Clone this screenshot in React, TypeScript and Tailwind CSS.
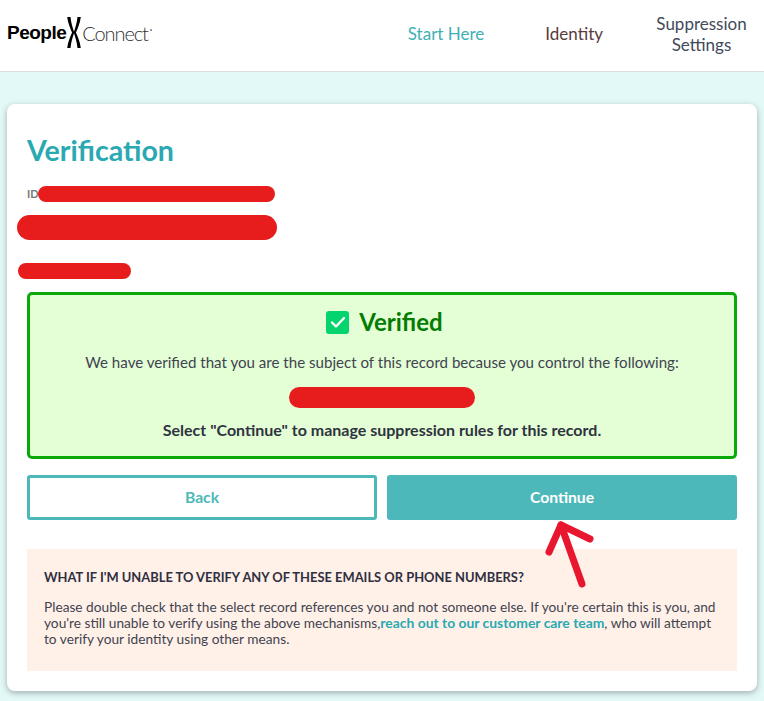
import React from 'react';

const fontStack = { fontFamily: '"Lato", "Noto Sans", sans-serif' };

const Logo = () => (
  <div className="mb-[6px] ml-[1px] flex items-center">
    <span className="font-['Liberation_Sans'] text-[19px] font-bold leading-none tracking-[-0.5px] text-black">People</span>
    <svg width="16" height="33" viewBox="0 0 16 34">
      <path d="M1 1h3.400c.6 6 2.200 11 3.600 15.200C9.400 12 11 7 11.600 1H15c-.8 7-3.400 12-5 16 1.600 4 4.200 9 5 16h-3.400C11 27 9.400 22 8 17.800 6.600 22 5 27 4.400 33H1c.8-7 3.400-12 5-16C4.400 13 1.800 8 1 1z" fill="#000" />
    </svg>
    <span className="font-['Lato'] text-[20px] font-light leading-none tracking-[-1.1px] text-[#333333]">Connect</span>
    <span className="mb-[6px] ml-[2px] h-[2px] w-[2px] rounded-full bg-[#777777]" />
  </div>
);

const App = () => {
  return (
    <div className="min-h-[701px] bg-[#e3f9f8] text-[#3f4450]" style={fontStack}>
      <header className="flex h-[72px] items-center border-b border-[#dddddd] bg-white pl-[6px]">
        <Logo />
        <nav className="mb-1 ml-auto flex items-center text-[17px] leading-[21px]">
          <a className="mr-[61px] text-[#3fb0b5]">Start Here</a>
          <a className="mr-[52px] text-[#5a3a3a]">Identity</a>
          <a className="mr-[16px] w-[93px] text-center text-[#3f4a5a]">Suppression Settings</a>
        </nav>
      </header>

      <main className="px-[7px] pt-[32px] pb-[10px]">
        <div className="relative h-[587px] rounded-lg bg-white px-5 pt-[28px] shadow-[0_2px_6px_rgba(0,0,0,0.3)]">
          <h1 className="text-[28.6px] font-bold leading-9 text-[#2aa9b3]">Verification</h1>
          <p className="mt-[18px] text-[11px] font-bold leading-4 text-[#777777]">ID</p>

          {/* redaction marks */}
          <div className="absolute left-[31px] top-[82px] h-[16px] w-[237px] rounded-full bg-[#e71d1d]" />
          <div className="absolute left-[10px] top-[111px] h-[25px] w-[260px] rounded-full bg-[#e71d1d]" />
          <div className="absolute left-[11px] top-[159px] h-[16px] w-[113px] rounded-full bg-[#e71d1d]" />

          <section className="mt-[90px] flex h-[167px] flex-col items-center rounded-[5px] border-[3px] border-[#0aa90a] bg-[#e4fed6] pt-[11px] text-center">
            <div className="flex items-center gap-[10px] pl-[5px]">
              <span className="flex h-[23px] w-[23px] items-center justify-center rounded-[3px] bg-[#04d36e]">
                <svg width="16" height="14" viewBox="0 0 16 14" fill="none" stroke="#fff" strokeWidth="2.400" strokeLinecap="round" strokeLinejoin="round">
                  <path d="M2 7.500 6 11.500 14 3" />
                </svg>
              </span>
              <span className="text-[24px] font-bold leading-8 text-[#037c03]">Verified</span>
            </div>
            <p className="mt-[12px] text-[15.1px] leading-6">We have verified that you are the subject of this record because you control the following:</p>
            <div className="mt-[13px] h-[21px] w-[186px] rounded-full bg-[#e71d1d]" />
            <p className="mt-[10px] text-[16px] font-bold leading-6 text-[#2f3340]">Select "Continue" to manage suppression rules for this record.</p>
          </section>

          <div className="mt-4 grid grid-cols-2 gap-[10px]">
            <button className="h-[45px] rounded-[3px] border-[3px] border-[#4db8ba] bg-white text-[15.7px] font-bold text-[#4db8ba]">Back</button>
            <button className="h-[45px] rounded-[3px] bg-[#4db8ba] text-[15.7px] font-bold text-white">Continue</button>
          </div>

          <section className="mt-[29px] h-[122px] bg-[#fff0e8] px-[17px] pt-[19px]">
            <h2 className="text-[12.9px] font-bold leading-[18px] text-[#2f2f3f]">WHAT IF I'M UNABLE TO VERIFY ANY OF THESE EMAILS OR PHONE NUMBERS?</h2>
            <p className="mt-[13px] text-[13.7px] leading-4">
              Please double check that the select record references you and not someone else. If you're certain this is you, and you're still unable to verify using the above mechanisms,
              <a className="text-[13.9px] font-bold text-[#2aa9b3]">reach out to our customer care team</a>, who will attempt to verify your identity using other means.
            </p>
          </section>

          {/* arrow annotation */}
          <svg className="absolute left-[530px] top-[416px]" width="64" height="72" viewBox="0 0 64 72" fill="none" stroke="#e8172f" strokeWidth="7" strokeLinecap="round" strokeLinejoin="round">
            <path d="M45 64 24 5" />
            <path d="M12 32 24 5 53 19" />
          </svg>
        </div>
      </main>
    </div>
  );
};

export default App;
